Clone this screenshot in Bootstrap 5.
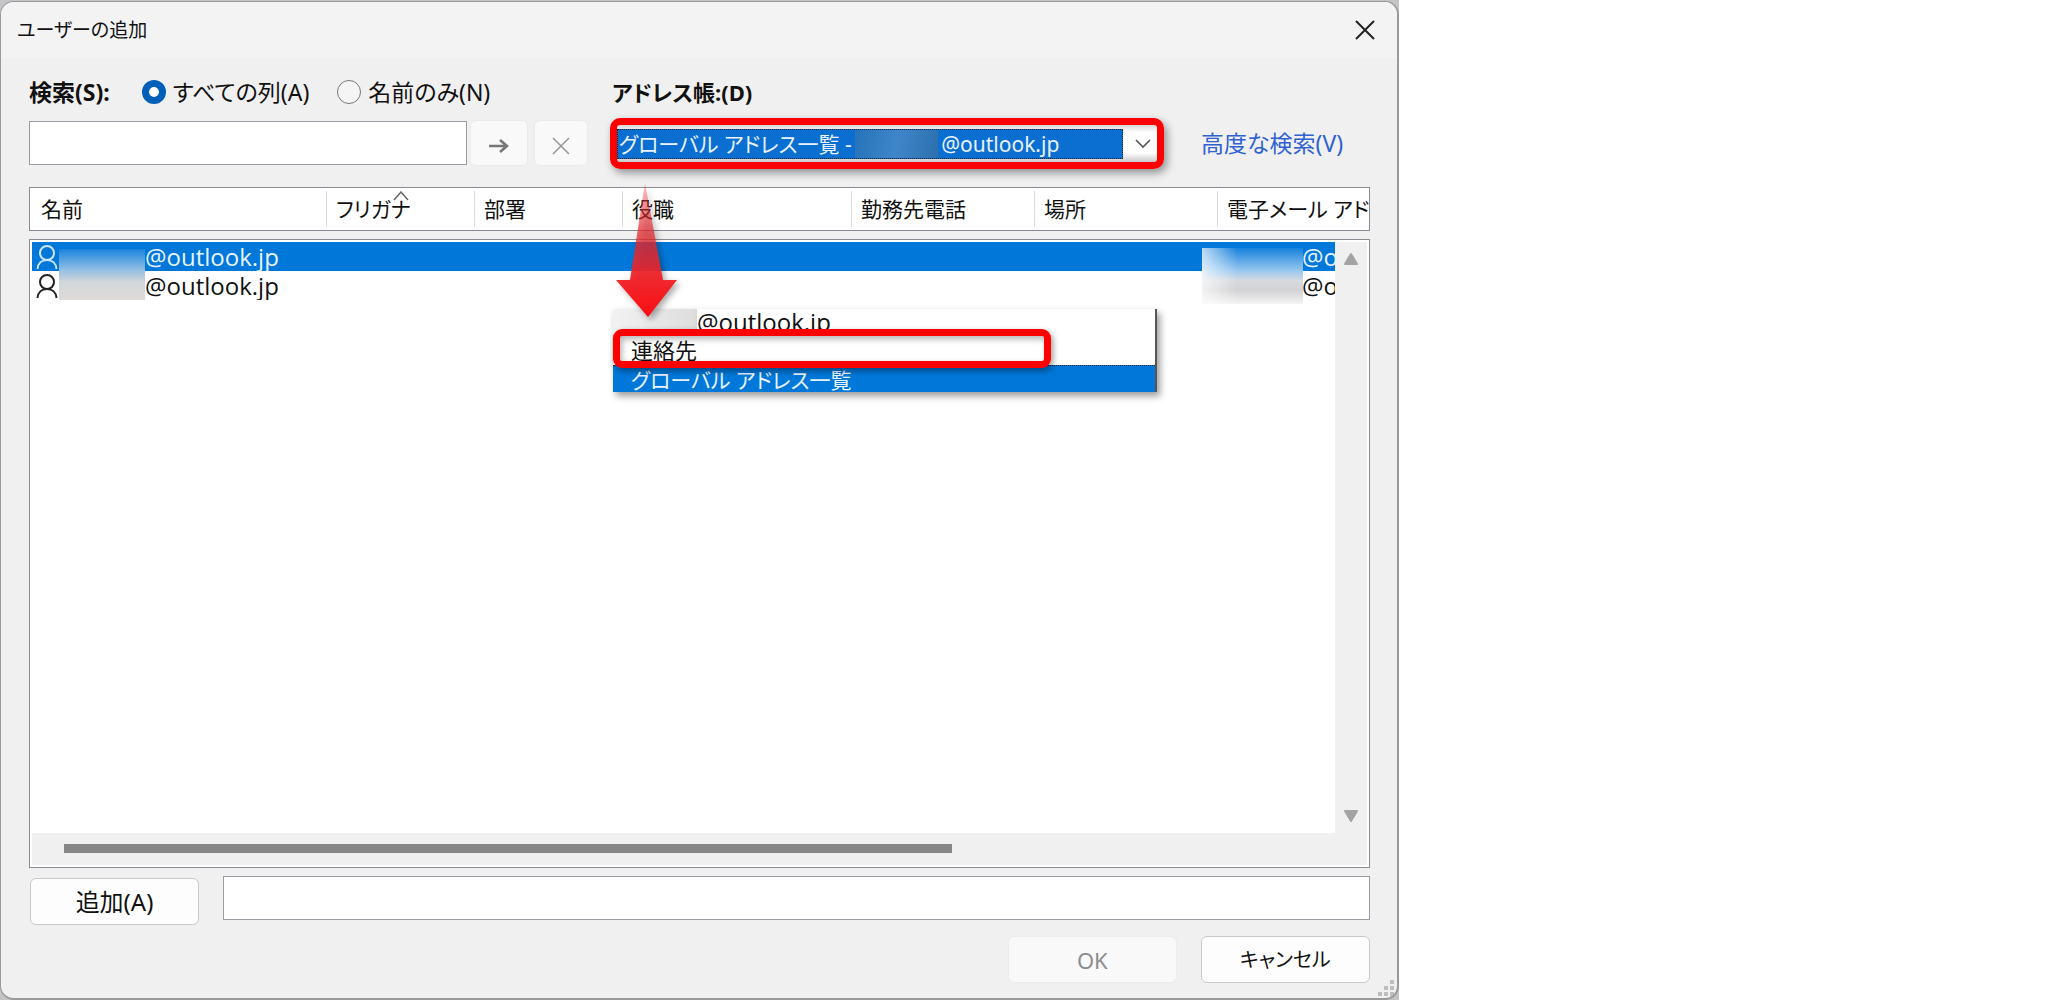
<!DOCTYPE html>
<html lang="ja">
<head>
<meta charset="utf-8">
<meta name="viewport" content="width=device-width, initial-scale=1">
<title>ユーザーの追加</title>
<link rel="stylesheet" href="https://cdn.jsdelivr.net/npm/bootstrap@5.3.0/dist/css/bootstrap.min.css">
<style>
body{font-family:"Noto Sans","Noto Sans CJK JP",sans-serif;font-size:22px;line-height:28px;font-feature-settings:"palt";color:#111;background:#fff}
button,select{font-feature-settings:inherit}
.desk{width:68.3%;min-width:1240px;min-height:100vh;background:#c4c4c6;padding-top:1px}
.dlg{background:#f0f0f0;border:1px solid #9a9a9c;border-right-width:2px;border-bottom-width:2px;border-radius:14px;overflow:hidden}
.dlg-title{height:56px;background:#f3f3f3;padding:0 20px 0 16px;font-size:19px}
.dlg-main{padding:18px 27px 15px 28px}
.closer{border:0;background:none;padding:0;width:24px;height:24px;line-height:0}
.lab{height:32px;font-size:23px}
.lab-q{margin-right:32px}
.lab-jp{font-size:22px}
.rad{appearance:none;width:24px;height:24px;border:1px solid #777;border-radius:50%;background:#f5f5f5;margin:0 7px 0 0}
.rad:checked{border:7px solid #005fb8;background:#fff}
.left-part{width:583px}
.tbox{height:44px;border:1px solid #9b9ba3;border-radius:0;background:#fff;min-width:0;padding:4px 8px}
.mini{height:46px;border:1px solid #ebebeb;border-radius:6px;background:#f9f9f9;padding:0}
.tools{height:52px;margin:9px 0 18px}
.go{width:58px;margin:0 6px 0 3px}
.clr{width:54px}
.combo{width:554px;height:51px;margin-left:-2px;border:7px solid #fe0000;border-radius:10px;background:linear-gradient(#d8d8d8,#fff 20%,#fff 75%,#c8c8c8);box-shadow:3px 4px 8px rgba(0,0,0,.4);padding:4px 6px 3px 0}
.combo select{appearance:none;border:1px dotted #ffb27a;outline:1px dotted #222;outline-offset:-1px;border-radius:0;background:#0a6fd0;color:#e8f2ff;height:30px;line-height:26px;padding:0 0 0 1px;width:506px;font-size:21px}
.cover{position:absolute;left:238px;top:5px;width:83px;height:28px;background:linear-gradient(100deg,#2573b9,#3f86c9 50%,#2b6fae)}
.adv{color:#2f62d0;text-decoration:none;margin-left:37px;font-size:23px}
.frame{border:1px solid #8b8b94;background:#fff}
.grid-t{table-layout:fixed;width:100%;margin:0;border-collapse:collapse}
.head-t th{font-weight:400;font-size:21px;height:42px;padding:0 0 0 11px;white-space:nowrap;overflow:hidden;position:relative}
.head-t th+th{padding-left:10px}
.head-t th+th::before{content:"";position:absolute;left:0;top:3px;bottom:3px;width:1px;background:#dcdcdc}
.c1{width:296px}.c2,.c3{width:148px}.c4{width:229px}.c5,.c6{width:183px}
.sort{position:absolute;left:67px;top:3px}
.list-area{min-height:0;padding:2px}
.rows td{height:29px;padding:0;white-space:nowrap;overflow:hidden;font-size:24px;line-height:28px;font-family:"Open Sans",sans-serif}
.rows .sel td{background:#0078d9;color:#e8f3ff}
.person{width:24px;height:26px;margin:0 3px}
.redact{display:inline-block;width:83px}
.veil{position:absolute}
.veil1{left:27px;top:7px;width:86px;height:51px;background:linear-gradient(#1b84dc,#8fbde4 40%,#d3d6d9 65%,#dedbd8)}
.veil2{right:32px;top:6px;width:101px;height:56px;background:linear-gradient(90deg,rgba(255,255,255,.7),rgba(255,255,255,0) 35%),linear-gradient(#1681dc,#9dcaf0 42%,#d6dadf 58%,#d2d2d4 75%,#f4f4f4)}
.vbar{width:32px;background:#f0f0f0;padding:10px 0}
.hbar{height:32px;background:#f0f0f0;padding:11px 0 0 32px}
.thumb{height:9px;width:68.2%;background:#868686}
.wbtn{width:169px;height:47px;border:1px solid #c9c9c9;border-radius:6px;background:#fdfdfd;padding:0;color:#111}
.wbtn:disabled{background:#f9f9f9;border-color:#ececec;color:#8d8d8d}
.wbtn-add{margin:2px 24px 0 1px;font-size:24px}
.kana{font-size:20px}
.foot{margin-top:11px}
.arrow{position:absolute;left:583px;top:-57px;z-index:5;filter:drop-shadow(3px 3px 3px rgba(0,0,0,.35))}
.drop{position:absolute;left:583px;top:69px;width:544px;height:83px;z-index:4;background:#fff;border-right:2px solid #555;box-shadow:3px 4px 7px rgba(0,0,0,.4);cursor:default}
.opt1{height:22px;overflow:hidden;padding-left:84px;font-family:"Open Sans",sans-serif;font-size:24px;line-height:26px;background:linear-gradient(90deg,#f2f2f2,#dedede 80px,#dad8d4 84px,#fff 84px)}
.opt2{height:34px;padding-left:18px;line-height:39px}
.opt3{height:27px;padding-left:18px;font-size:21px;line-height:28px;background:#0078d9;color:#e8f3ff;overflow:hidden;border-top:1px dotted #222}
.ring{position:absolute;left:0;top:20px;width:438px;height:39px;border:7px solid #fe0000;border-radius:9px;box-shadow:2px 3px 6px rgba(0,0,0,.4),inset 2px 3px 6px rgba(0,0,0,.3)}
.grip{position:absolute;right:1px;bottom:0}
</style>
<script src="https://cdn.jsdelivr.net/npm/bootstrap@5.3.0/dist/js/bootstrap.bundle.min.js"></script>
</head>
<body>
<div class="desk d-flex flex-column">
<div class="dlg d-flex flex-column flex-grow-1 position-relative" role="dialog" aria-labelledby="ttl">
  <header class="dlg-title d-flex align-items-center justify-content-between">
    <span id="ttl">ユーザーの追加</span>
    <button class="closer" type="button" aria-label="閉じる"><svg width="24" height="24" viewBox="0 0 24 24" stroke="#222" stroke-width="2"><path d="M3 3L21 21M21 3L3 21"/></svg></button>
  </header>
  <form class="dlg-main d-flex flex-column flex-grow-1">
    <div class="lab d-flex align-items-center">
      <div class="left-part d-flex align-items-center flex-shrink-0">
        <label class="fw-bold lab-q" for="q">検索(S):</label>
        <input class="rad" type="radio" name="scope" id="all" checked><label class="me-4" for="all">すべての列(A)</label>
        <input class="rad ms-1" type="radio" name="scope" id="nm"><label for="nm">名前のみ(N)</label>
      </div>
      <label class="fw-bold lab-jp" for="book">アドレス帳:(D)</label>
    </div>
    <div class="tools d-flex align-items-center">
      <div class="left-part d-flex align-items-center flex-shrink-0">
        <input class="tbox flex-grow-1" id="q" type="text">
        <button class="mini go" type="button" aria-label="検索" disabled><svg width="20" height="16" viewBox="0 0 20 16" fill="none" stroke="#777" stroke-width="2.6"><path d="M0 8H18M11 2L18 8L11 14"/></svg></button>
        <button class="mini clr me-4" type="button" aria-label="クリア" disabled><svg width="18" height="18" viewBox="0 0 18 18" stroke="#999" stroke-width="1.6"><path d="M1 1L17 17M17 1L1 17"/></svg></button>
      </div>
      <div class="combo d-flex align-items-center justify-content-between position-relative flex-shrink-0">
        <select id="book"><option>グローバル アドレス一覧 - &emsp;&emsp;&emsp;&emsp;@outlook.jp</option></select>
        <span class="cover"></span>
        <svg width="16" height="10" viewBox="0 0 16 10" fill="none" stroke="#555" stroke-width="1.6"><path d="M1 1L8 8L15 1"/></svg>
      </div>
      <a class="adv text-nowrap" href="#">高度な検索(V)</a>
    </div>
    <div class="frame mb-2">
      <table class="grid-t head-t">
        <colgroup><col class="c1"><col class="c2"><col class="c3"><col class="c4"><col class="c5"><col class="c6"><col></colgroup>
        <thead><tr><th>名前</th><th>フリガナ<svg class="sort" width="16" height="10" viewBox="0 0 16 10" fill="none" stroke="#666" stroke-width="1.5"><path d="M1 9L8 1L15 9"/></svg></th><th>部署</th><th>役職</th><th>勤務先電話</th><th>場所</th><th>電子メール アド</th></tr></thead>
      </table>
    </div>
    <div class="frame list-area position-relative d-flex flex-column flex-grow-1">
      <div class="d-flex flex-grow-1">
        <div class="flex-grow-1 position-relative">
          <table class="grid-t rows">
            <colgroup><col class="c1"><col class="c2"><col class="c3"><col class="c4"><col class="c5"><col class="c6"><col></colgroup>
            <tbody>
              <tr class="sel"><td><div class="d-flex align-items-center"><svg class="person" viewBox="0 0 24 26" fill="none" stroke="#cfe4f8" stroke-width="2"><circle cx="12" cy="9" r="7"/><path d="M2.500 25C3 19 7 16 12 16S21 19 21.500 25"/></svg><span class="redact"></span>@outlook.jp</div></td><td></td><td></td><td></td><td></td><td></td><td><span class="redact"></span>@outlook.jp</td></tr>
              <tr><td><div class="d-flex align-items-center"><svg class="person" viewBox="0 0 24 26" fill="none" stroke="#222" stroke-width="2"><circle cx="12" cy="9" r="7"/><path d="M2.500 25C3 19 7 16 12 16S21 19 21.500 25"/></svg><span class="redact"></span>@outlook.jp</div></td><td></td><td></td><td></td><td></td><td></td><td><span class="redact"></span>@outlook.jp</td></tr>
            </tbody>
          </table>
          <span class="veil veil1"></span><span class="veil veil2"></span>
        </div>
        <div class="vbar d-flex flex-column justify-content-between align-items-center flex-shrink-0">
          <svg width="16" height="14" viewBox="0 0 16 14" fill="#a3a3a3" stroke="#a3a3a3" stroke-width="2" stroke-linejoin="round"><path d="M8 2L14 12H2Z"/></svg>
          <svg width="16" height="14" viewBox="0 0 16 14" fill="#a3a3a3" stroke="#a3a3a3" stroke-width="2" stroke-linejoin="round"><path d="M8 12L14 2H2Z"/></svg>
        </div>
      </div>
      <div class="hbar"><div class="thumb"></div></div>
      <svg class="arrow" width="68" height="136" viewBox="0 0 68 136"><defs><linearGradient id="ag" x1="0" y1="0" x2="0" y2="1"><stop offset="0" stop-color="#f33" stop-opacity=".3"/><stop offset=".35" stop-color="#e62a30" stop-opacity=".7"/><stop offset=".7" stop-color="#f02228" stop-opacity=".95"/><stop offset="1" stop-color="#fb0d10"/></linearGradient></defs><path fill="url(#ag)" d="M32 0L50 97H64L35 134L3 97H17Z"/></svg>
      <div class="drop" role="listbox" aria-label="アドレス帳">
        <div class="opt1" role="option">@outlook.jp</div>
        <div class="opt2" role="option">連絡先</div>
        <div class="opt3" role="option" aria-selected="true">グローバル アドレス一覧</div>
        <span class="ring"></span>
      </div>
    </div>
    <div class="d-flex align-items-start mt-2">
      <button class="wbtn wbtn-add flex-shrink-0" type="button">追加(A)</button>
      <input class="tbox flex-grow-1" type="text" aria-label="追加するユーザー">
    </div>
    <div class="foot d-flex justify-content-end gap-4">
      <button class="wbtn" type="button" disabled>OK</button>
      <button class="wbtn kana" type="button">キャンセル</button>
    </div>
  </form>
  <svg class="grip" width="18" height="18" viewBox="0 0 18 18" fill="#bdbdbd"><path d="M12 0h4v4h-4zM6 6h4v4H6zM12 6h4v4h-4zM0 12h4v4H0zM6 12h4v4H6zM12 12h4v4h-4z"/></svg>
</div>
</div>
</body>
</html>
